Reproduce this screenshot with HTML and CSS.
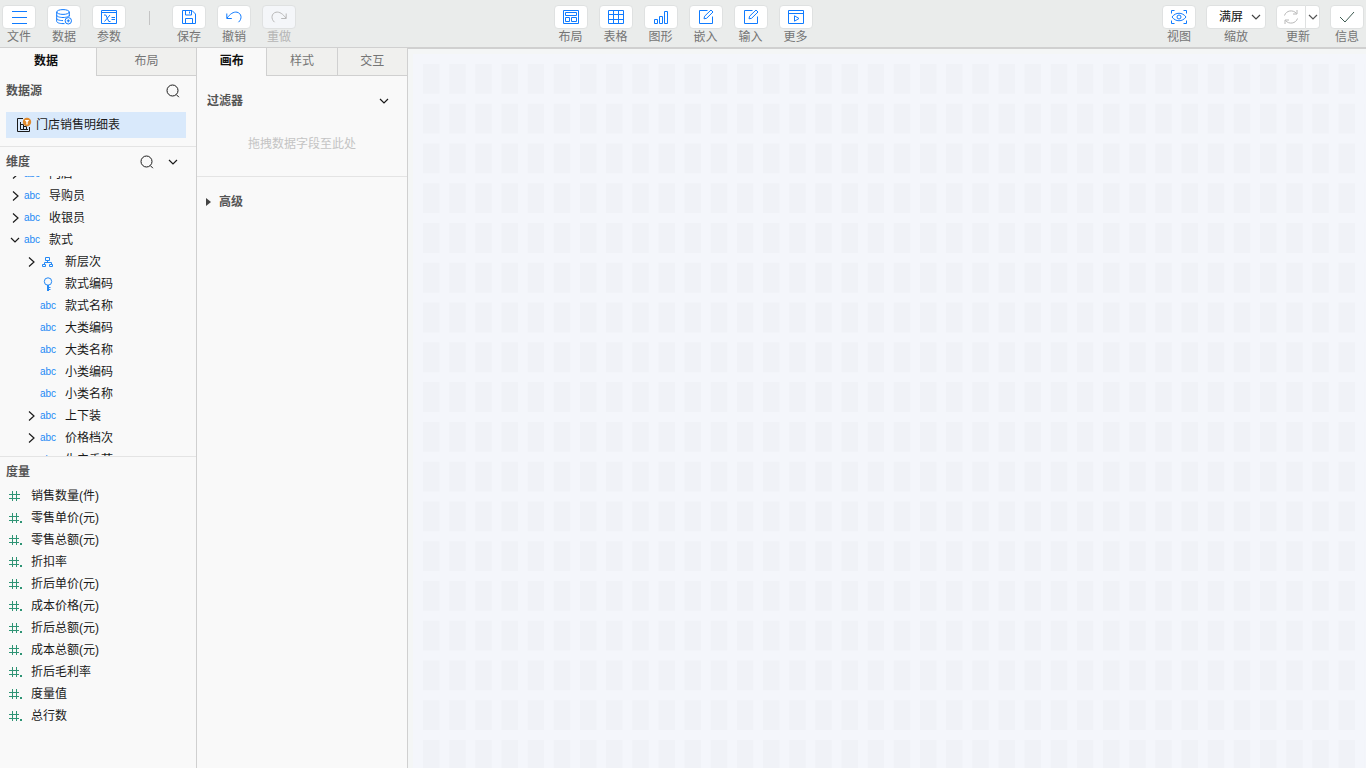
FILE: index.html
```html
<!DOCTYPE html>
<html lang="zh-CN">
<head>
    <meta charset="UTF-8">
    <meta name="viewport" content="width=device-width, initial-scale=1.0">
    <title>报表设计</title>
    <link rel="stylesheet" href="styles.css">
</head>
<body>
    <!-- 公用图标 -->
    <svg class="sprite" aria-hidden="true">
        <symbol id="i-search" viewBox="0 0 14 14"><circle cx="6.5" cy="6.5" r="5.5"/><path d="M10.3 10.6l2.6 2.6"/></symbol>
        <symbol id="i-down" viewBox="0 0 10 10"><path d="M1 3l4 4 4-4"/></symbol>
        <symbol id="i-right" viewBox="0 0 10 10"><path d="M3 0.5L8 5 3 9.5"/></symbol>
        <symbol id="i-edit" viewBox="0 0 16 16"><path d="M9.5 1.5h-8v13h13v-7M6 9.8l.6-2.6 6.4-6.2 2 2-6.4 6.3z"/></symbol>
        <symbol id="i-hash" viewBox="0 0 14 12"><path d="M4.5 1v10M8.5 1v10M1 4.5h11M1 8.5h11"/></symbol>
        <symbol id="i-hashdot" viewBox="0 0 14 12"><path d="M4.5 1v10M8.5 1v10M1 4.5h10M1 8.5h10M12 9.5h2M12 10.5h2"/></symbol>
    </svg>

    <header class="toolbar">
        <div class="tool-group left">
            <div class="tool">
                <button id="file"><svg viewBox="0 0 16 16"><path d="M1 2.5h15M1 8.5h15M1 14.5h15"/></svg></button>
                <label for="file">文件</label>
            </div>
            <div class="tool">
                <button id="data"><svg viewBox="0 0 16 16"><ellipse cx="7" cy="3" rx="6.3" ry="2.4"/><path d="M.7 3v9.3c0 1.4 2.8 2.3 6.3 2.3h1.5M13.3 3v4.5M.7 6.2c0 1.3 2.8 2.3 6.3 2.3s6.3-1 6.3-2.3M.7 9.4c0 1.3 2.8 2.2 6.3 2.2"/><circle cx="12.3" cy="11.8" r="3.2"/><path d="M12.3 10.3v3M10.8 11.8h3"/></svg></button>
                <label for="data">数据</label>
            </div>
            <div class="tool">
                <button id="param"><svg viewBox="0 0 16 16"><path d="M.5 1.5h15v13H.5zM.5 3.5h15M3 6h1.8l3 6.5h1.7M9 6l-5.5 6.5M10.5 8.5h3.5M10.5 10.5h3.5"/></svg></button>
                <label for="param">参数</label>
            </div>
            <span class="split"></span>
            <div class="tool">
                <button id="save"><svg viewBox="0 0 16 16"><path d="M1.5 1.5H11L14.5 5v9.5h-13zM4.5 1.5V6h6V1.5M8.5 2.5v2M4.5 14.5v-5h7v5"/></svg></button>
                <label for="save">保存</label>
            </div>
            <div class="tool">
                <button id="undo"><svg viewBox="0 0 16 16"><path d="M.8 4.5v5h5M1 9.2C4 5 7.5 2.5 11 3.2c4.5 1 5.5 6.5 1.5 10"/></svg></button>
                <label for="undo">撤销</label>
            </div>
            <div class="tool">
                <button id="redo" disabled><svg viewBox="0 0 16 16"><path d="M15.2 4.5v5h-5M15 9.2C12 5 8.5 2.5 5 3.2c-4.5 1-5.5 6.5-1.5 10"/></svg></button>
                <label for="redo">重做</label>
            </div>
        </div>

        <div class="tool-group">
            <div class="tool">
                <button id="layout"><svg viewBox="0 0 16 16"><path d="M.5 1.5h15v13H.5zM2.5 3.5h11v3h-11zM2.5 8.5h4v4h-4zM8.5 8.5h5v4h-5z"/></svg></button>
                <label for="layout">布局</label>
            </div>
            <div class="tool">
                <button id="table"><svg viewBox="0 0 16 16"><path d="M.5 1.5h15v13H.5zM5.5 1.5v13M10.5 1.5v13M.5 5.5h15M.5 10.5h15"/></svg></button>
                <label for="table">表格</label>
            </div>
            <div class="tool">
                <button id="chart"><svg viewBox="0 0 16 16"><path d="M1.5 10.5h3v4h-3zM6.5 7.5h3v7h-3zM11.5 2.5h3v12h-3z"/></svg></button>
                <label for="chart">图形</label>
            </div>
            <div class="tool">
                <button id="embed"><svg><use href="#i-edit"/></svg></button>
                <label for="embed">嵌入</label>
            </div>
            <div class="tool">
                <button id="input"><svg><use href="#i-edit"/></svg></button>
                <label for="input">输入</label>
            </div>
            <div class="tool">
                <button id="more"><svg viewBox="0 0 16 16"><path d="M.5 1.5h15v13H.5zM.5 4.5h15M6.5 6.8L11 9.5l-4.5 2.7z"/></svg></button>
                <label for="more">更多</label>
            </div>
        </div>

        <div class="tool-group right">
            <div class="tool">
                <button id="view"><svg viewBox="0 0 16 16"><path d="M.5 4.5v-3h3M12.5 1.5h3v3M15.5 11.5v3h-3M3.5 14.5h-3v-3M1 8c3.5-5 10.5-5 14 0-3.5 5-10.5 5-14 0z"/><circle cx="8" cy="8" r="2"/></svg></button>
                <label for="view">视图</label>
            </div>
            <div class="tool">
                <div class="zoom-box">
                    <select id="zoom"><option>满屏</option><option>100%</option></select>
                    <svg class="arrow"><use href="#i-down"/></svg>
                </div>
                <label for="zoom">缩放</label>
            </div>
            <div class="tool">
                <div class="btn-pair">
                    <button id="refresh" disabled><svg viewBox="0 0 16 16"><path d="M1.5 6.5C3 1.5 10 .2 13.5 4.5M14 1v4h-4M14.5 9.5C13 14.500 6 15.800 2.500 11.500M2 15v-4h4"/></svg></button>
                    <button class="drop" aria-label="更新选项"><svg class="arrow"><use href="#i-down"/></svg></button>
                </div>
                <label for="refresh">更新</label>
            </div>
            <div class="tool">
                <button id="info" class="check"><svg viewBox="0 0 16 16"><path d="M1 8l5 5L15 3"/></svg></button>
                <label for="info">信息</label>
            </div>
        </div>
    </header>

    <main class="main">
        <aside class="panel data-panel">
            <nav class="tabs">
                <button class="active">数据</button>
                <button>布局</button>
            </nav>
            <section class="source">
                <div class="head">
                    <h2>数据源</h2>
                    <button class="icon-btn" aria-label="搜索数据源"><svg class="search"><use href="#i-search"/></svg></button>
                </div>
                <a class="source-item" href="#">
                    <svg viewBox="0 0 16 16"><path d="M7 1.5H1.5v13h12V10M4.5 5v7.5H12M4.5 7.5h3v5M7.5 9.5h3v3"/><circle cx="11" cy="5" r="4.2"/><path class="funnel" d="M8.8 3h4.4l-1.5 2v2.5h-1.4V5z"/></svg>
                    门店销售明细表
                </a>
            </section>
            <section class="dimension">
                <div class="head">
                    <h2>维度</h2>
                    <button class="icon-btn" aria-label="搜索维度"><svg class="search"><use href="#i-search"/></svg></button>
                    <button class="icon-btn" aria-label="收起"><svg class="arrow"><use href="#i-down"/></svg></button>
                </div>
                <div class="tree">
                    <ul>
                        <li><svg class="arrow"><use href="#i-right"/></svg><i>abc</i>门店</li>
                        <li><svg class="arrow"><use href="#i-right"/></svg><i>abc</i>导购员</li>
                        <li><svg class="arrow"><use href="#i-right"/></svg><i>abc</i>收银员</li>
                        <li><svg class="arrow"><use href="#i-down"/></svg><i>abc</i>款式</li>
                        <li class="sub"><svg class="arrow"><use href="#i-right"/></svg><i><svg viewBox="0 0 12 12"><path d="M3.5 1.5h4v3h-4zM.5 8.5h3v2h-3zM7.5 8.5h3v2h-3zM5.5 4.5v2M2.5 8.500v-2h7v2"/></svg></i>新层次</li>
                        <li class="sub"><i><svg class="key" viewBox="0 0 12 14"><circle cx="6" cy="4.5" r="3.7"/><path d="M5.5 8v6M6.5 8v6M6.5 10.5h2M6.5 12.5h2"/></svg></i>款式编码</li>
                        <li class="sub"><i>abc</i>款式名称</li>
                        <li class="sub"><i>abc</i>大类编码</li>
                        <li class="sub"><i>abc</i>大类名称</li>
                        <li class="sub"><i>abc</i>小类编码</li>
                        <li class="sub"><i>abc</i>小类名称</li>
                        <li class="sub"><svg class="arrow"><use href="#i-right"/></svg><i>abc</i>上下装</li>
                        <li class="sub"><svg class="arrow"><use href="#i-right"/></svg><i>abc</i>价格档次</li>
                        <li class="sub"><i>abc</i>生产季节</li>
                    </ul>
                </div>
            </section>
            <section class="measure">
                <div class="head"><h2>度量</h2></div>
                <ul>
                    <li><svg><use href="#i-hash"/></svg>销售数量(件)</li>
                    <li><svg><use href="#i-hashdot"/></svg>零售单价(元)</li>
                    <li><svg><use href="#i-hashdot"/></svg>零售总额(元)</li>
                    <li><svg><use href="#i-hashdot"/></svg>折扣率</li>
                    <li><svg><use href="#i-hashdot"/></svg>折后单价(元)</li>
                    <li><svg><use href="#i-hashdot"/></svg>成本价格(元)</li>
                    <li><svg><use href="#i-hashdot"/></svg>折后总额(元)</li>
                    <li><svg><use href="#i-hashdot"/></svg>成本总额(元)</li>
                    <li><svg><use href="#i-hashdot"/></svg>折后毛利率</li>
                    <li><svg><use href="#i-hashdot"/></svg>度量值</li>
                    <li><svg><use href="#i-hashdot"/></svg>总行数</li>
                </ul>
            </section>
        </aside>

        <aside class="panel setting-panel">
            <nav class="tabs">
                <button class="active">画布</button>
                <button>样式</button>
                <button>交互</button>
            </nav>
            <section class="filter">
                <div class="head">
                    <h2>过滤器</h2>
                    <button class="icon-btn" aria-label="收起过滤器"><svg class="arrow"><use href="#i-down"/></svg></button>
                </div>
                <p>拖拽数据字段至此处</p>
            </section>
            <details class="advanced">
                <summary>高级</summary>
            </details>
        </aside>

        <div class="stage">
            <div class="canvas">
                <div class="cells"></div>
            </div>
        </div>
    </main>
</body>
</html>
```
FILE: styles.css
```css
* {
    box-sizing: border-box;
}
body {
    margin: 0;
    height: 100vh;
    display: flex;
    flex-direction: column;
    overflow: hidden;
    font: 12px/18px "Liberation Sans", "Noto Sans CJK SC", sans-serif;
    color: #1a1a1a;
    background-color: #f9f9f9;
}
button, select {
    font: inherit;
    color: inherit;
    margin: 0;
    padding: 0;
    border: none;
    background: none;
}
ul {
    list-style: none;
    margin: 0;
    padding: 0;
}
h2, p {
    margin: 0;
    font-size: 12px;
}
svg {
    width: 16px;
    height: 16px;
    fill: none;
    stroke: currentColor;
    flex-shrink: 0;
}
.sprite {
    display: none;
}
svg.arrow {
    width: 10px;
    height: 10px;
    stroke-width: 1.2;
}
svg.search {
    width: 14px;
    height: 14px;
}

/* 顶部工具栏 */
.toolbar {
    display: grid;
    grid-template-columns: 1fr auto 1fr;
    height: 48px;
    padding: 5px 2px 0;
    background-color: #eaeceb;
    border-bottom: 1px solid #d0d0d0;
    flex-shrink: 0;
}
.tool-group {
    display: flex;
    gap: 11px;
}
.tool-group.right {
    gap: 10px;
    justify-content: flex-end;
}
.tool {
    display: flex;
    flex-direction: column;
    align-items: center;
    color: #757575;
}
.tool button {
    display: flex;
    align-items: center;
    justify-content: center;
    width: 34px;
    height: 24px;
    background-color: #fff;
    border: 1px solid #dfe1e1;
    border-radius: 4px;
    color: #0f7bff;
}
.tool label {
    line-height: 16px;
}
.tool button:disabled {
    color: #b8b8b8;
}
#redo {
    background-color: #f4f6f9;
}
#redo + label {
    color: #b5b5b5;
}
.split {
    width: 1px;
    height: 14px;
    margin: 6px 11px 0 12px;
    background-color: #c4c4c4;
}
.zoom-box {
    position: relative;
}
.zoom-box select {
    appearance: none;
    display: block;
    width: 60px;
    height: 24px;
    padding-left: 12px;
    background-color: #fff;
    border: 1px solid #dfe1e1;
    border-radius: 4px;
    color: #111;
}
.zoom-box .arrow {
    position: absolute;
    right: 5px;
    top: 7px;
    color: #444;
    pointer-events: none;
}
.btn-pair {
    display: flex;
}
.btn-pair #refresh {
    width: 30px;
    border-radius: 4px 0 0 4px;
}
.btn-pair .drop {
    width: 14px;
    border-left: none;
    border-radius: 0 4px 4px 0;
    color: #555;
}
.tool .check {
    color: #3c5a50;
}

/* 主体 */
.main {
    flex: 1;
    display: flex;
    min-height: 0;
}
.panel {
    display: flex;
    flex-direction: column;
    flex-shrink: 0;
    border-right: 1px solid #d0d0d0;
}
.data-panel {
    width: 197px;
}
.setting-panel {
    width: 211px;
}
.tabs {
    display: flex;
    height: 28px;
    flex-shrink: 0;
}
.tabs button {
    flex: 1;
    padding-bottom: 2px;
    color: #757575;
    background-color: #f0f0ee;
    border-left: 1px solid #d0d0d0;
    border-bottom: 1px solid #d0d0d0;
}
.tabs .active {
    color: #111;
    font-weight: bold;
    background: none;
    border: none;
}
.data-panel .active {
    flex: 0 0 96px;
    padding-right: 4px;
}
.head {
    display: flex;
    align-items: center;
    height: 29px;
    padding: 0 10px 0 6px;
}
.head h2 {
    flex: 1;
    color: #555;
}
.icon-btn {
    display: flex;
    align-items: center;
    justify-content: center;
    width: 26px;
    height: 26px;
}
.source {
    padding-bottom: 8px;
    border-bottom: 1px solid #e4e4e4;
}
.source-item {
    display: flex;
    align-items: center;
    gap: 4px;
    height: 26px;
    margin: 7px 10px 0 6px;
    padding-left: 10px;
    color: #1a1a1a;
    text-decoration: none;
    background-color: #d9e9fb;
}
.source-item circle {
    fill: #e08a2c;
    stroke: none;
}
.source-item .funnel {
    fill: #fff;
    stroke: none;
}
.tree {
    height: 281px;
    overflow: hidden;
    border-bottom: 1px solid #e4e4e4;
}
/* 列表已滚动一段 */
.tree ul {
    margin-top: -13px;
}
.tree li {
    display: grid;
    grid-template-columns: 10px 29px 1fr;
    align-items: center;
    height: 22px;
    padding-left: 10px;
}
.tree .sub {
    padding-left: 26px;
}
.tree i {
    grid-column: 2;
    display: flex;
    justify-content: center;
    padding-right: 5px;
    font: 10px/12px "Liberation Sans", sans-serif;
    color: #2489f5;
}
.tree i svg {
    width: 12px;
    height: 12px;
}
.tree i .key {
    height: 14px;
}
.measure .head {
    height: 28px;
    padding-top: 2px;
}
.measure li {
    display: flex;
    align-items: center;
    gap: 9px;
    height: 22px;
    padding-left: 8px;
}
.measure svg {
    width: 14px;
    height: 12px;
    color: #2f9475;
}
.filter {
    padding: 12px 0 23px;
    border-bottom: 1px solid #e4e4e4;
}
.filter .head {
    height: 26px;
    padding-left: 10px;
}
.filter p {
    padding-top: 21px;
    text-align: center;
    line-height: 18px;
    color: #c4c4c4;
}
.advanced summary {
    display: flex;
    align-items: center;
    gap: 8px;
    padding: 16px 9px;
    font-weight: bold;
    color: #555;
}
.advanced summary::before {
    content: "";
    border: solid transparent;
    border-width: 4px 0 4px 5px;
    border-left-color: #444;
}

/* 画布 */
.stage {
    flex: 1;
    min-width: 0;
    padding: 5px 0 0 5px;
    overflow: hidden;
    background-color: #f4f6f6;
    border-top: 1px solid #d0d0d0;
}
.canvas {
    height: 100%;
    padding: 10px 1px 0 10px;
    background-color: #f4f6fb;
}
.cells {
    height: calc(100% + 12px);
    background-image:
        linear-gradient(to right, transparent 62%, #f4f6fb 62%),
        linear-gradient(to bottom, #f0f2f7 75%, #f4f6fb 75%);
    background-size: 26px 40px;
    background-repeat: round;
}
```
